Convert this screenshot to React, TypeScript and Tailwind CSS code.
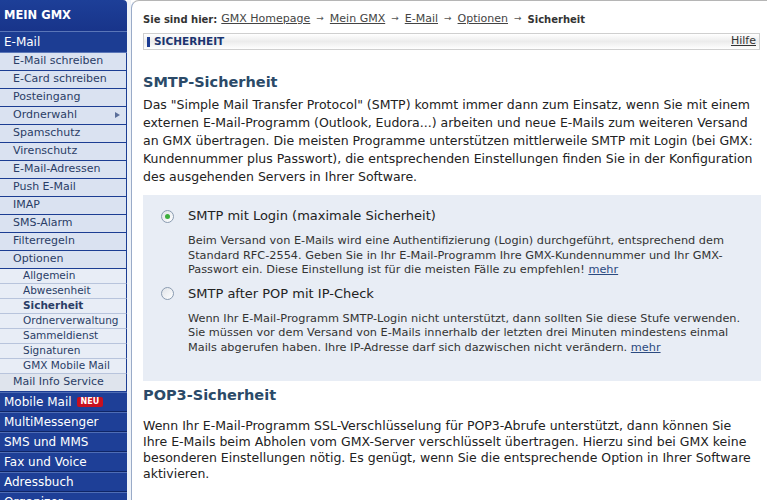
import type { ReactNode } from "react";

type NavItem = {
  label: string;
  level: "top" | "sub" | "subsub" | "info" | "dark";
  active?: boolean;
  arrow?: boolean;
  badge?: string;
};

const nav: NavItem[] = [
  { label: "E-Mail", level: "top" },
  { label: "E-Mail schreiben", level: "sub" },
  { label: "E-Card schreiben", level: "sub" },
  { label: "Posteingang", level: "sub" },
  { label: "Ordnerwahl", level: "sub", arrow: true },
  { label: "Spamschutz", level: "sub" },
  { label: "Virenschutz", level: "sub" },
  { label: "E-Mail-Adressen", level: "sub" },
  { label: "Push E-Mail", level: "sub" },
  { label: "IMAP", level: "sub" },
  { label: "SMS-Alarm", level: "sub" },
  { label: "Filterregeln", level: "sub" },
  { label: "Optionen", level: "sub" },
  { label: "Allgemein", level: "subsub" },
  { label: "Abwesenheit", level: "subsub" },
  { label: "Sicherheit", level: "subsub", active: true },
  { label: "Ordnerverwaltung", level: "subsub" },
  { label: "Sammeldienst", level: "subsub" },
  { label: "Signaturen", level: "subsub" },
  { label: "GMX Mobile Mail", level: "subsub" },
  { label: "Mail Info Service", level: "info" },
  { label: "Mobile Mail", level: "dark", badge: "NEU" },
  { label: "MultiMessenger", level: "dark" },
  { label: "SMS und MMS", level: "dark" },
  { label: "Fax und Voice", level: "dark" },
  { label: "Adressbuch", level: "dark" },
  { label: "Organizer", level: "dark" },
];

function NavRow({ item }: { item: NavItem }) {
  if (item.level === "top") {
    return (
      <div className="flex h-[21px] items-center border-b border-[#5a76b8] bg-[#1c3d93] pl-[4px] text-[12px] text-white">
        {item.label}
      </div>
    );
  }
  if (item.level === "dark") {
    return (
      <div className="flex h-[20px] items-center gap-[5px] border-b border-t border-b-[#0f2566] border-t-[#4f6db5] bg-[#1e3f97] pl-[4px] text-[12px] text-white">
        {item.label}
        {item.badge && (
          <span className="rounded-[2px] bg-[#c8101e] px-[4px] text-[8px] leading-[10px] font-bold text-white">
            {item.badge}
          </span>
        )}
      </div>
    );
  }
  if (item.level === "subsub") {
    return (
      <div
        className={`flex h-[15px] items-center border-b border-r border-b-[#b8c4dc] border-r-[#1c3d93] bg-[#e8edf6] pl-[23px] text-[10.5px] text-[#2a3d66] ${
          item.active ? "font-bold text-[#1a2a4d]" : ""
        }`}
      >
        {item.label}
      </div>
    );
  }
  if (item.level === "info") {
    return (
      <div className="flex h-[18px] items-center border-b border-r border-b-[#1c3d93] border-r-[#1c3d93] bg-[#dfe4ed] pl-[13px] text-[11px] text-[#2a3d66]">
        {item.label}
      </div>
    );
  }
  return (
    <div className="relative flex h-[18px] items-center border-b border-r border-b-[#1c3d93] border-r-[#1c3d93] bg-[#dae2f1] pl-[13px] text-[11px] text-[#2a3d66]">
      {item.label}
      {item.arrow && (
        <span className="absolute right-[6px] top-[5px] h-0 w-0 border-y-[3px] border-l-[5px] border-y-transparent border-l-[#5a6e9a]" />
      )}
    </div>
  );
}

function Radio({ checked }: { checked?: boolean }) {
  return (
    <span className="flex h-[13px] w-[13px] shrink-0 items-center justify-center rounded-full border border-[#8a9bb0] bg-gradient-to-br from-[#dfe3e8] to-white">
      {checked && <span className="h-[5px] w-[5px] rounded-full bg-[#3cae3c]" />}
    </span>
  );
}

function Option({
  checked,
  title,
  children,
}: {
  checked?: boolean;
  title: string;
  children: ReactNode;
}) {
  return (
    <div>
      <div className="flex h-[16px] items-center gap-[14px] pl-[18px]">
        <Radio checked={checked} />
        <span className="text-[13px] text-[#222]">{title}</span>
      </div>
      <p className="mt-[10px] pl-[45px] pr-[9px] text-[11.3px] leading-[14.5px] text-[#333]">{children}</p>
    </div>
  );
}

function Crumb({ children }: { children: ReactNode }) {
  return <a className="text-[#444] underline">{children}</a>;
}

const Arrow = () => <span className="mx-[6px] text-[9px] text-[#555]">→</span>;

export default function App() {
  return (
    <div className="flex h-[500px] w-[767px] overflow-hidden bg-white font-['DejaVu_Sans',Verdana,sans-serif]">
      <aside className="w-[127px] shrink-0">
        <div className="flex h-[32px] items-center rounded-tr-[4px] border-b border-[#5a76b8] bg-gradient-to-b from-[#1d3f98] to-[#18348a] pl-[4px] text-[11.5px] font-bold text-white">
          MEIN GMX
        </div>
        {nav.map((item) => (
          <NavRow key={item.label} item={item} />
        ))}
      </aside>

      <div className="w-[4px] shrink-0 bg-[#eef2f8]" />

      <main className="min-w-0 flex-1 rounded-tl-[8px] border-l border-t border-l-[#9aabc8] border-t-[#b5b5b5] pl-[11px] pr-[6px]">
        <div className="mt-[10px] flex h-[16px] items-center text-[11px] text-[#333]">
          <b className="mr-[4px] text-[10px]">Sie sind hier:</b>
          <Crumb>GMX Homepage</Crumb>
          <Arrow />
          <Crumb>Mein GMX</Crumb>
          <Arrow />
          <Crumb>E-Mail</Crumb>
          <Arrow />
          <Crumb>Optionen</Crumb>
          <Arrow />
          <b className="text-[10px]">Sicherheit</b>
        </div>

        <div className="mt-[6px] mr-[1px] flex h-[17px] items-center justify-between border border-[#cfcfcf] bg-gradient-to-b from-white via-[#ececec] to-white pl-[3px] pr-[3px]">
          <div className="flex items-center gap-[4px]">
            <span className="h-[10px] w-[3px] bg-[#1c3d93]" />
            <span className="text-[10.5px] font-bold text-[#1c3570]">SICHERHEIT</span>
          </div>
          <a className="text-[11px] text-[#333] underline">Hilfe</a>
        </div>

        <h2 className="mt-[22px] text-[14.5px] leading-[20px] font-bold text-[#2b4a68]">SMTP-Sicherheit</h2>
        <p className="mt-[4px] text-[12.5px] leading-[18px] text-[#222]">
          Das "Simple Mail Transfer Protocol" (SMTP) kommt immer dann zum Einsatz, wenn Sie mit einem
          externen E-Mail-Programm (Outlook, Eudora...) arbeiten und neue E-Mails zum weiteren Versand
          an GMX übertragen. Die meisten Programme unterstützen mittlerweile SMTP mit Login (bei GMX:
          Kundennummer plus Passwort), die entsprechenden Einstellungen finden Sie in der Konfiguration
          des ausgehenden Servers in Ihrer Software.
        </p>

        <div className="mt-[9px] flex flex-col gap-[8px] bg-[#e8edf5] pb-[26px] pt-[13px]">
          <Option checked title="SMTP mit Login (maximale Sicherheit)">
            Beim Versand von E-Mails wird eine Authentifizierung (Login) durchgeführt, entsprechend dem
            Standard RFC-2554. Geben Sie in Ihr E-Mail-Programm Ihre GMX-Kundennummer und Ihr GMX-
            Passwort ein. Diese Einstellung ist für die meisten Fälle zu empfehlen!{" "}
            <a className="text-[#2b4a80] underline">mehr</a>
          </Option>
          <Option title="SMTP after POP mit IP-Check">
            Wenn Ihr E-Mail-Programm SMTP-Login nicht unterstützt, dann sollten Sie diese Stufe verwenden.
            Sie müssen vor dem Versand von E-Mails innerhalb der letzten drei Minuten mindestens einmal
            Mails abgerufen haben. Ihre IP-Adresse darf sich dazwischen nicht verändern.{" "}
            <a className="text-[#2b4a80] underline">mehr</a>
          </Option>
        </div>

        <h2 className="mt-[4px] text-[14.5px] leading-[20px] font-bold text-[#2b4a68]">POP3-Sicherheit</h2>
        <p className="mt-[13px] pr-[10px] text-[12.5px] leading-[16px] text-[#222]">
          Wenn Ihr E-Mail-Programm SSL-Verschlüsselung für POP3-Abrufe unterstützt, dann können Sie
          Ihre E-Mails beim Abholen vom GMX-Server verschlüsselt übertragen. Hierzu sind bei GMX keine
          besonderen Einstellungen nötig. Es genügt, wenn Sie die entsprechende Option in Ihrer Software
          aktivieren.
        </p>
      </main>
    </div>
  );
}
